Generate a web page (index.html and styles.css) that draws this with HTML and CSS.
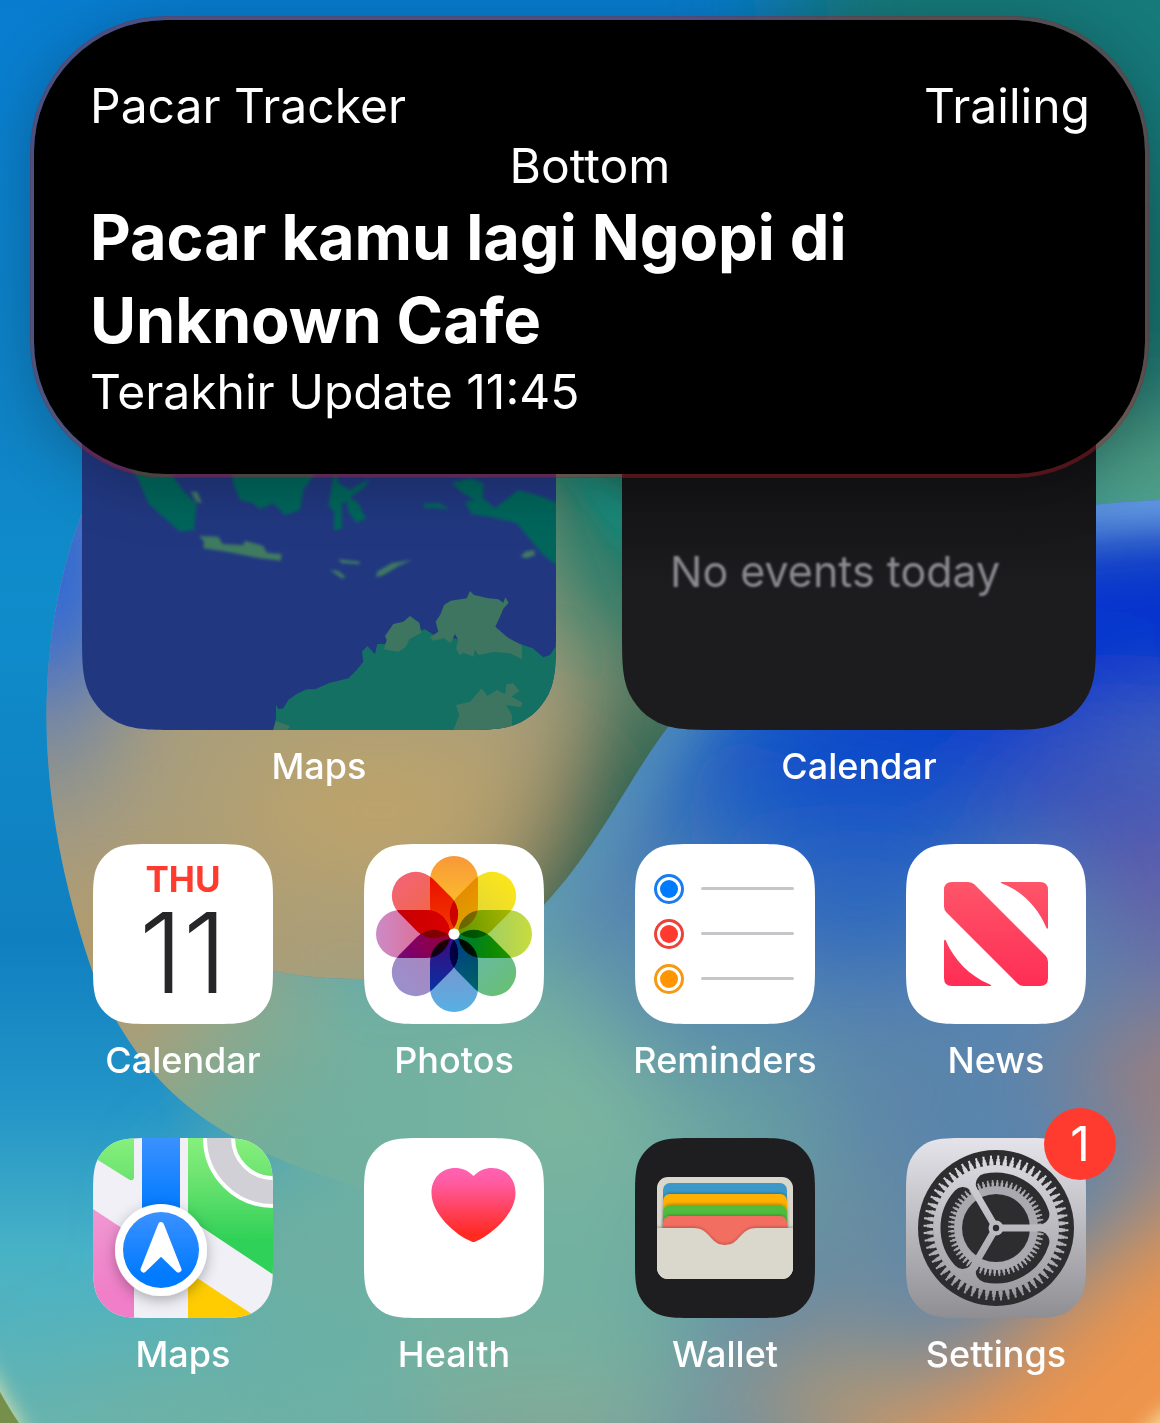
FILE: index.html
```html
<!DOCTYPE html>
<html lang="en">
<head>
<meta charset="utf-8">
<meta name="viewport" content="width=device-width, initial-scale=1">
<title>Home Screen</title>
<link rel="stylesheet" href="styles.css">
</head>
<body>
<svg class="wallpaper" viewBox="0 0 1160 1423" preserveAspectRatio="none" aria-hidden="true">
  <defs>
    <clipPath id="app-shape" clipPathUnits="objectBoundingBox">
      <path transform="scale(.0055556)" d="M61 0H119C136.500 0 145.300 0 154.700 3C165.100 6.800 173.200 14.900 177 25.300C180 34.700 180 43.500 180 61V119C180 136.500 180 145.300 177 154.700C173.200 165.100 165.100 173.200 154.700 177C145.300 180 136.500 180 119 180H61C43.500 180 34.700 180 25.300 177C14.900 173.200 6.800 165.100 3 154.700C0 145.300 0 136.500 0 119V61C0 43.500 0 34.700 3 25.300C6.800 14.900 14.900 6.800 25.300 3C34.700 0 43.500 0 61 0Z"/>
    </clipPath>
    <clipPath id="widget-shape" clipPathUnits="objectBoundingBox">
      <path transform="scale(.0021097)" d="M101 0H373C402 0 417 0 432 5C449 11 463 25 469 42C474 57 474 72 474 101V373C474 402 474 417 469 432C463 449 449 463 432 469C417 474 402 474 373 474H101C72 474 57 474 42 469C25 463 11 449 5 432C0 417 0 402 0 373V101C0 72 0 57 5 42C11 25 25 11 42 5C57 0 72 0 101 0Z"/>
    </clipPath>
    <filter id="soft" filterUnits="userSpaceOnUse" x="-400" y="-400" width="2000" height="2300"><feGaussianBlur stdDeviation="55"/></filter>
    <filter id="softer" filterUnits="userSpaceOnUse" x="-400" y="-400" width="2000" height="2300"><feGaussianBlur stdDeviation="22"/></filter>
    <filter id="edge" filterUnits="userSpaceOnUse" x="-400" y="-400" width="2000" height="2300"><feGaussianBlur stdDeviation="10"/></filter>
    <linearGradient id="sky" x1="0" y1="0" x2="0" y2="1">
      <stop offset="0" stop-color="#087dd0"/><stop offset=".3" stop-color="#0f84c6"/>
      <stop offset=".42" stop-color="#0f8ccb"/><stop offset=".66" stop-color="#107fc0"/>
      <stop offset=".78" stop-color="#2496c8"/><stop offset=".88" stop-color="#48b2c6"/>
      <stop offset="1" stop-color="#66b4b0"/>
    </linearGradient>
    <linearGradient id="fade-x" gradientUnits="userSpaceOnUse" x1="190" y1="1240" x2="400" y2="1190">
      <stop offset="0" stop-color="#000"/><stop offset="1" stop-color="#fff"/>
    </linearGradient>
    <linearGradient id="rim" gradientUnits="userSpaceOnUse" x1="560" y1="900" x2="1160" y2="500">
      <stop offset="0" stop-color="#64a8b4" stop-opacity=".5"/><stop offset=".35" stop-color="#4a98cc" stop-opacity=".5"/><stop offset="1" stop-color="#70a8f0" stop-opacity=".95"/>
    </linearGradient>
    <mask id="fade" maskUnits="userSpaceOnUse" x="0" y="0" width="1160" height="1423"><rect width="1160" height="1423" fill="url(#fade-x)"/></mask>
    <clipPath id="petal"><path d="M100 470C20 640 40 820 93 973C150 1110 240 1150 362 1188L700 1240V440Z"/></clipPath>
    <clipPath id="wave"><path d="M150 930C230 965 290 980 364 979C440 976 500 950 544 905C600 845 630 775 672 722C780 590 920 510 1160 500V1423H100Z"/></clipPath>
  </defs>
  <rect width="1160" height="1423" fill="url(#sky)"/>
  <g filter="url(#soft)">
    <path d="M780 -200H1400V560H820Z" fill="#12797a"/>
    <ellipse cx="1130" cy="300" rx="60" ry="140" fill="#146d66"/>
    <ellipse cx="1170" cy="500" rx="130" ry="70" fill="#59a586"/>
    <ellipse cx="300" cy="1250" rx="110" ry="90" fill="#6eae9e"/>
    <ellipse cx="220" cy="1430" rx="160" ry="60" fill="#70b0a2"/>
  </g>
  <g clip-path="url(#petal)">
    <rect width="1160" height="1423" fill="#a99e7a"/>
    <g filter="url(#soft)">
      <ellipse cx="40" cy="560" rx="100" ry="150" fill="#2c66dc"/>
      <ellipse cx="50" cy="760" rx="35" ry="60" fill="#6080b0"/>
      <ellipse cx="380" cy="810" rx="150" ry="60" fill="#c2a466"/>
      <ellipse cx="150" cy="940" rx="90" ry="60" fill="#b89862"/>
      <path d="M480 300H800V640H560Z" fill="#1d7868"/>
      <path d="M720 560L600 740L520 900L440 1020L740 1000Z" fill="#1a5c4c"/>
      <path d="M240 1050H700V1400H200Z" fill="#6aae9c"/>
      <path d="M60 1130L300 1040V1300Z" fill="#74ae96"/>
    </g>
    <path d="M556 460L630 500V560Z" fill="#168a7c" filter="url(#edge)"/>
  </g>
  <g mask="url(#fade)"><g clip-path="url(#wave)">
    <rect width="1160" height="1423" fill="#5585b0"/>
    <g filter="url(#soft)">
      <path d="M640 850L720 660H1000V860Z" fill="#1c60c4"/>
      <ellipse cx="900" cy="740" rx="180" ry="80" fill="#0b49ca"/>
      <path d="M760 560L1400 500V700H900Z" fill="#002ed0"/>
      <ellipse cx="1120" cy="800" rx="130" ry="60" fill="#3c4fb8"/>
      <ellipse cx="860" cy="910" rx="130" ry="60" fill="#2f68be"/>
      <ellipse cx="1180" cy="910" rx="80" ry="60" fill="#6e5ca0"/>
      <ellipse cx="900" cy="1090" rx="90" ry="60" fill="#5f84a6"/>
      <ellipse cx="1200" cy="1080" rx="130" ry="60" fill="#b07c70"/>
      <path d="M1400 1080L1140 1210L960 1380L760 1600H1400Z" fill="#ee944c"/>
      <path d="M100 900L560 930L660 1060L720 1180L680 1500H0Z" fill="#72b0a0"/>
      <ellipse cx="750" cy="1140" rx="70" ry="110" fill="#68a0a0"/>
      <ellipse cx="580" cy="1110" rx="80" ry="60" fill="#80b89e"/>
      <ellipse cx="560" cy="1440" rx="150" ry="40" fill="#8ea890"/>
      <ellipse cx="840" cy="1400" rx="110" ry="60" fill="#b89a6e"/>
      <ellipse cx="860" cy="1240" rx="60" ry="50" fill="#7c9090"/>
    </g>
    <path d="M364 979C440 976 500 950 544 905C600 845 630 775 672 722C780 590 920 510 1160 500H1260" fill="none" stroke="url(#rim)" stroke-width="44" filter="url(#softer)"/>
    <path d="M1180 1400Q1150 1420 1136 1445H1180Z" fill="#f5e0a0" filter="url(#edge)"/>
  </g></g>
  <path d="M-20 1350Q0 1390 30 1440H-20Z" fill="#d2e0b0" filter="url(#edge)"/>
  <path d="M0 1392Q10 1410 19 1423H0Z" fill="#76904c"/>
</svg>

<main class="screen">
  <section class="island" aria-label="Pacar Tracker">
    <div class="island-top"><span>Pacar Tracker</span><span>Trailing</span></div>
    <p class="island-bottom">Bottom</p>
    <h1 class="island-title">Pacar kamu lagi Ngopi di Unknown Cafe</h1>
    <p>Terakhir Update 11:45</p>
  </section>

  <div class="widgets">
    <a class="tile" href="#maps-widget">
      <span class="widget">
        <svg viewBox="0 0 474 474" aria-hidden="true">
          <defs>
            <filter id="map-blur" x="-5%" y="-10%" width="110%" height="120%"><feGaussianBlur stdDeviation="4"/></filter>
          </defs>
          <rect width="474" height="474" fill="#213881"/>
          <g transform="translate(-12 184) scale(.33333)">
            <g filter="url(#map-blur)">
              <g fill="#06665c">
                <path d="M170 60L210 130L235 190L290 240L330 275L372 270L380 190L345 160L320 125L270 60Z"/>
                <path d="M480 60L490 130L510 180L550 190L570 208L610 190L645 225L690 210L700 150L735 100L700 40Z"/>
                <path d="M795 90L805 130L840 150L900 115L880 145L840 172L865 190L888 235L860 250L835 215L830 185L815 190L817 265L792 272L792 215L775 195Z"/>
                <path d="M1060 190L1110 190L1138 210L1105 205L1065 203Z"/>
                <path d="M1145 130L1200 115L1240 130L1238 175L1275 205L1345 150L1400 165L1480 195V390L1420 345L1390 310L1340 250L1260 230L1205 222L1185 185L1215 180L1180 160Z"/>
              </g>
              <g fill="#3f7a60">
                <path d="M362 155L382 155L396 190L380 185Z"/>
                <path d="M388 288L445 290L458 312L520 315L525 302L580 318L590 338L635 342L632 362L570 355L520 345L470 335L400 325L402 305Z"/>
                <path d="M805 358L870 365L868 373L815 369Z"/>
                <path d="M780 390L805 393L828 412L815 415Z"/>
                <path d="M918 412L922 395L965 370L1025 360L985 378L940 405Z"/>
                <path d="M1352 350L1365 335L1392 330L1395 345L1370 355Z"/>
              </g>
            </g>
            <path fill="#147062" d="M608 875L618 835L618 795L626 808L640 805L655 780L680 762L710 748L735 748L780 728L835 715L860 690L880 665L876 635L892 618L915 642L922 612L945 612L990 590L1065 568L1100 590L1200 600L1350 612L1388 625L1420 652L1440 645L1460 615V875Z"/>
            <g fill="#3e7561">
              <path d="M942 628L950 600L945 588L970 552L1000 545L1020 528L1048 548L1054 578L1018 598L1008 620L985 635Z"/>
              <path d="M1080 592L1105 575L1097 545L1112 522L1122 495L1142 482L1190 475L1200 453L1212 465L1255 475L1285 478L1300 488L1306 472L1316 488L1300 506L1290 530L1276 560L1312 592L1355 615L1356 658L1320 640L1270 636L1225 645L1215 628L1210 650L1180 638L1168 645L1158 625L1165 600L1155 582L1142 610L1122 595L1090 602Z"/>
              <path d="M1148 875L1168 825L1158 795L1200 785L1235 745L1252 768L1280 750L1305 762L1310 732L1330 730L1348 752L1325 770L1358 788L1352 802L1308 795L1326 825V875Z"/>
              <path d="M608 875L618 843L660 858L650 875Z"/>
            </g>
          </g>
        </svg>
      </span>
      <span class="label">Maps</span>
    </a>
    <a class="tile" href="#calendar-widget">
      <span class="widget widget-calendar"><span class="events">No events today</span></span>
      <span class="label">Calendar</span>
    </a>
  </div>

  <nav class="apps" aria-label="Apps">
    <a class="tile app" href="#calendar">
      <span class="icon icon-calendar"><span class="weekday">THU</span><span class="day">11</span></span>
      <span class="label">Calendar</span>
    </a>
    <a class="tile app" href="#photos">
      <svg class="icon" viewBox="0 0 180 180" aria-hidden="true">
        <defs>
          <!-- Petal colours are stored inverted: the group adds them up, then inverts the sum -->
          <linearGradient id="p1" x1="0" y1="0" x2="0" y2="1"><stop offset="0" stop-color="#0767c7"/><stop offset="1" stop-color="#002fd7"/></linearGradient>
          <linearGradient id="p2" x1="0" y1="0" x2="0" y2="1"><stop offset="0" stop-color="#0419e5"/><stop offset="1" stop-color="#272fbf"/></linearGradient>
          <linearGradient id="p3" x1="0" y1="0" x2="0" y2="1"><stop offset="0" stop-color="#3723c3"/><stop offset="1" stop-color="#773b7f"/></linearGradient>
          <linearGradient id="p4" x1="0" y1="0" x2="0" y2="1"><stop offset="0" stop-color="#973f8b"/><stop offset="1" stop-color="#974b3f"/></linearGradient>
          <linearGradient id="p5" x1="0" y1="0" x2="0" y2="1"><stop offset="0" stop-color="#a94f1b"/><stop offset="1" stop-color="#73773b"/></linearGradient>
          <linearGradient id="p6" x1="0" y1="0" x2="0" y2="1"><stop offset="0" stop-color="#656f33"/><stop offset="1" stop-color="#4f7f47"/></linearGradient>
          <linearGradient id="p7" x1="0" y1="0" x2="0" y2="1"><stop offset="0" stop-color="#337539"/><stop offset="1" stop-color="#179f83"/></linearGradient>
          <linearGradient id="p8" x1="0" y1="0" x2="0" y2="1"><stop offset="0" stop-color="#0d9b8b"/><stop offset="1" stop-color="#0f97cf"/></linearGradient>
        </defs>
        <rect width="180" height="180" fill="#fff"/>
        <g class="petals">
          <rect x="66" y="12" width="48" height="74" rx="24" fill="url(#p1)"/>
          <rect x="66" y="12" width="48" height="74" rx="24" fill="url(#p2)" transform="rotate(45 90 90)"/>
          <rect x="66" y="12" width="48" height="74" rx="24" fill="url(#p3)" transform="rotate(90 90 90)"/>
          <rect x="66" y="12" width="48" height="74" rx="24" fill="url(#p4)" transform="rotate(135 90 90)"/>
          <rect x="66" y="12" width="48" height="74" rx="24" fill="url(#p5)" transform="rotate(180 90 90)"/>
          <rect x="66" y="12" width="48" height="74" rx="24" fill="url(#p6)" transform="rotate(225 90 90)"/>
          <rect x="66" y="12" width="48" height="74" rx="24" fill="url(#p7)" transform="rotate(270 90 90)"/>
          <rect x="66" y="12" width="48" height="74" rx="24" fill="url(#p8)" transform="rotate(315 90 90)"/>
        </g>
        <circle cx="90" cy="90" r="5.500" fill="#fff"/>
      </svg>
      <span class="label">Photos</span>
    </a>
    <a class="tile app" href="#reminders">
      <svg class="icon" viewBox="0 0 180 180" aria-hidden="true">
        <rect width="180" height="180" fill="#fff"/>
        <g fill="none" stroke-width="3">
          <circle cx="34" cy="45" r="13.500" stroke="#1a7cf0"/><circle cx="34" cy="90" r="13.500" stroke="#ee4238"/><circle cx="34" cy="135" r="13.500" stroke="#f59a12"/>
          <path d="M67.500 44.500H157.500M67.500 89.500H157.500M67.500 134.500H157.500" stroke="#c6c6ca" stroke-linecap="round"/>
        </g>
        <circle cx="34" cy="45" r="9" fill="#007aff"/><circle cx="34" cy="90" r="9" fill="#ff3b30"/><circle cx="34" cy="135" r="9" fill="#ff9500"/>
      </svg>
      <span class="label">Reminders</span>
    </a>
    <a class="tile app" href="#news">
      <svg class="icon" viewBox="0 0 180 180" aria-hidden="true">
        <defs><linearGradient id="news" gradientUnits="userSpaceOnUse" x1="0" y1="38" x2="0" y2="142"><stop offset="0" stop-color="#fe5569"/><stop offset="1" stop-color="#ff2d55"/></linearGradient></defs>
        <rect width="180" height="180" fill="#fff"/>
        <path fill="url(#news)" d="M46 38H62Q66 38 68.500 40.500L139.500 111.500Q142 114 142 117.500V134Q142 142 134 142H118Q114 142 111.500 139.500L40.500 68.500Q38 66 38 62.500V46Q38 38 46 38ZM95 38H134Q142 38 142 46V84Q141 86 140 83C132 64 116 47 97 40Q94 38.500 95 38ZM38 97Q39 94 40 97C48 116 64 132 83 140Q86 141.500 85 142H46Q38 142 38 134Z"/>
      </svg>
      <span class="label">News</span>
    </a>
    <a class="tile app" href="#maps">
      <svg class="icon" viewBox="0 0 180 180" aria-hidden="true">
        <defs>
          <linearGradient id="mg" gradientUnits="userSpaceOnUse" x1="0" y1="0" x2="0" y2="120"><stop offset="0" stop-color="#86f07c"/><stop offset=".3" stop-color="#70e472"/><stop offset=".85" stop-color="#30d158"/></linearGradient>
          <linearGradient id="mb" x1="0" y1="0" x2="0" y2="1"><stop offset="0" stop-color="#3b91ff"/><stop offset=".85" stop-color="#007aff"/></linearGradient>
          <linearGradient id="mp" x1="0" y1="0" x2="0" y2="1"><stop offset="0" stop-color="#f098d2"/><stop offset=".8" stop-color="#f07ec8"/></linearGradient>
          <filter id="ms" x="-30%" y="-30%" width="160%" height="160%"><feDropShadow dx="0" dy="4" stdDeviation="7" flood-color="#000" flood-opacity=".3"/></filter>
        </defs>
        <rect width="180" height="180" fill="#f1f0f7"/>
        <path d="M0 0H41V39Q41 43.500 36 41.500L0 19Z" fill="url(#mg)"/>
        <path d="M0 71L41 98V180H0Z" fill="url(#mp)"/>
        <path d="M49 0H87V85H49Z" fill="url(#mb)"/>
        <path d="M95 0H180V136.500L95 80Z" fill="url(#mg)"/>
        <path d="M95 134L165 180H95Z" fill="#ffcc02"/>
        <circle cx="180" cy="0" r="54" fill="none" stroke="#fff" stroke-width="32"/>
        <circle cx="180" cy="0" r="54" fill="none" stroke="#d1d0d7" stroke-width="24"/>
        <circle cx="68" cy="112" r="46" fill="#fff" filter="url(#ms)"/>
        <circle cx="68" cy="112" r="38" fill="url(#mb)"/>
        <path d="M68 87L85.500 131.500L68 114.500L50.500 131.500Z" fill="#fff" stroke="#fff" stroke-width="6" stroke-linejoin="round"/>
      </svg>
      <span class="label">Maps</span>
    </a>
    <a class="tile app" href="#health">
      <svg class="icon" viewBox="0 0 180 180" aria-hidden="true">
        <defs><linearGradient id="heart" x1="0" y1="0" x2="0" y2="1"><stop offset="0" stop-color="#ff62b4"/><stop offset=".2" stop-color="#ff5ba0"/><stop offset=".9" stop-color="#ff2a20"/></linearGradient></defs>
        <rect width="180" height="180" fill="#fff"/>
        <path fill="url(#heart)" d="M109.500 38C115.500 32 121.500 30 127.500 30C141.500 30 151.500 40 151.500 55C151.500 76 127.500 97 111.500 103.500Q109.500 104.500 107.500 103.500C91.500 97 67.500 76 67.500 55C67.500 40 77.500 30 91.500 30C97.500 30 103.500 32 109.500 38Z"/>
      </svg>
      <span class="label">Health</span>
    </a>
    <a class="tile app" href="#wallet">
      <svg class="icon" viewBox="0 0 180 180" aria-hidden="true">
        <defs>
          <clipPath id="wc"><rect x="22" y="39" width="136" height="102" rx="11"/></clipPath>
          <filter id="ws" x="-10%" y="-20%" width="120%" height="140%"><feDropShadow dx="0" dy="-1" stdDeviation="1.500" flood-color="#000" flood-opacity=".25"/></filter>
        </defs>
        <rect width="180" height="180" fill="#1e1e20"/>
        <g clip-path="url(#wc)">
          <rect x="22" y="39" width="136" height="102" fill="#dad8cd"/>
          <rect x="28" y="45" width="124" height="60" rx="7" fill="#3b98c9"/>
          <rect x="28" y="56" width="124" height="60" rx="7" fill="#ffb003" filter="url(#ws)"/>
          <rect x="28" y="67" width="124" height="60" rx="7" fill="#50bc3e" filter="url(#ws)"/>
          <rect x="28" y="78" width="124" height="60" rx="7" fill="#f26e61" filter="url(#ws)"/>
          <path d="M20 90H58C76 90 74 107 90 107C106 107 104 90 122 90H160V145H20Z" fill="#dad8cd" filter="url(#ws)"/>
        </g>
      </svg>
      <span class="label">Wallet</span>
    </a>
    <a class="tile app" href="#settings">
      <svg class="icon" viewBox="0 0 180 180" aria-hidden="true">
        <defs>
          <linearGradient id="sb" x1="0" y1="0" x2="0" y2="1"><stop offset="0" stop-color="#e5e4ea"/><stop offset="1" stop-color="#8e8e93"/></linearGradient>
          <linearGradient id="sg" gradientUnits="userSpaceOnUse" x1="0" y1="18" x2="0" y2="162"><stop offset="0" stop-color="#dcdbe1"/><stop offset="1" stop-color="#98989d"/></linearGradient>
        </defs>
        <rect width="180" height="180" fill="url(#sb)"/>
        <circle cx="90" cy="90" r="78" fill="#2d2d2f"/>
        <circle cx="90" cy="90" r="63" fill="url(#sg)"/>
        <g fill="none" stroke="url(#sg)">
          <circle cx="90" cy="90" r="64.500" stroke-width="4" pathLength="60" stroke-dasharray=".62 .38"/>
          <circle cx="90" cy="90" r="67.500" stroke-width="3" pathLength="60" stroke-dasharray=".46 .54" stroke-dashoffset="-.08"/>
          <circle cx="90" cy="90" r="70.500" stroke-width="4" pathLength="60" stroke-dasharray=".28 .72" stroke-dashoffset="-.17"/>
        </g>
        <g fill="none" stroke="#2d2d2f" stroke-width="21" stroke-linecap="round">
          <path d="M132.900 76.500A45 45 0 0 0 80.300 46.100"/>
          <path d="M56.800 59.600A45 45 0 0 0 56.800 120.400"/>
          <path d="M80.300 133.900A45 45 0 0 0 132.900 103.500"/>
        </g>
        <g fill="none" stroke="#aaa9af">
          <circle cx="90" cy="90" r="38" stroke-width="8"/>
          <circle cx="90" cy="90" r="43.500" stroke-width="4" pathLength="60" stroke-dasharray=".58 .42"/>
          <circle cx="90" cy="90" r="46.500" stroke-width="3" pathLength="60" stroke-dasharray=".34 .66" stroke-dashoffset="-.12"/>
        </g>
        <circle cx="90" cy="90" r="34" fill="#2d2d2f"/>
        <path d="M90 90H146M90 90L62 42M90 90L62 138" fill="none" stroke="url(#sg)" stroke-width="7"/>
        <circle cx="90" cy="90" r="7.500" fill="#bcbbc1"/>
        <circle cx="90" cy="90" r="3.200" fill="#2d2d2f"/>
      </svg>
      <span class="badge">1</span>
      <span class="label">Settings</span>
    </a>
  </nav>
</main>
</body>
</html>
```
FILE: styles.css
```css
* {
  box-sizing: border-box;
}

body {
  margin: 0;
  background: #107fc0;
  color: #fff;
  font-family: Inter, "Liberation Sans", sans-serif;
}

p,
h1 {
  margin: 0;
}

a {
  color: inherit;
  text-decoration: none;
}

.wallpaper {
  position: fixed;
  inset: 0;
  z-index: -1;
  width: 100%;
  height: 100%;
}

.screen {
  position: relative;
  min-height: 100vh;
  padding: 256px 64px 47px 82px;
}

/* Expanded live activity, floating over the home screen */
.island {
  position: absolute;
  top: 16px;
  left: 30px;
  right: 11px;
  z-index: 1;
  padding: 56px 55px 52px 56px;
  border: 4px solid rgba(160, 24, 34, 0.45);
  border-radius: 136px;
  background: #000;
  background-clip: padding-box;
  box-shadow: 0 8px 60px rgba(0, 0, 0, 0.25);
  font-size: 48px;
  line-height: 60px;
}

.island-top {
  display: flex;
  justify-content: space-between;
}

.island-bottom {
  text-align: center;
}

.island-title {
  font-size: 63px;
  font-weight: 700;
  line-height: 83px;
}

.tile {
  position: relative;
  display: flex;
  flex-direction: column;
  align-items: center;
  gap: 14px;
}

.label {
  font-size: 36px;
  font-weight: 500;
  line-height: 44px;
  white-space: nowrap;
}

.widgets {
  display: grid;
  grid-template-columns: 1fr 1fr;
  gap: 66px;
}

.widget {
  display: block;
  width: 100%;
  aspect-ratio: 1;
  clip-path: url(#widget-shape);
}

.widget svg {
  display: block;
  width: 100%;
  height: 100%;
}

.widget-calendar {
  display: flex;
  align-items: center;
  padding: 156px 48px 0;
  background: linear-gradient(#111113 40%, #1c1c1e 70%);
}

.events {
  color: #8a8a90;
  font-size: 43px;
  filter: blur(1px);
  white-space: nowrap;
}

.apps {
  display: grid;
  grid-template-columns: repeat(4, 180px);
  justify-content: space-between;
  row-gap: 56px;
  margin-top: 56px;
  padding: 0 10px 0 11px;
}

.icon {
  display: block;
  width: 180px;
  height: 180px;
  clip-path: url(#app-shape);
}

.icon-calendar {
  display: flex;
  flex-direction: column;
  align-items: center;
  padding-top: 17px;
  background: #fff;
}

.weekday {
  color: #ff3b30;
  font-size: 35px;
  font-weight: 700;
  line-height: 36px;
}

.day {
  color: #262628;
  font-size: 112px;
  font-weight: 300;
  line-height: 110px;
}

.petals {
  filter: invert(1);
}

.petals rect {
  mix-blend-mode: plus-lighter;
}

.badge {
  position: absolute;
  top: -30px;
  right: -30px;
  width: 72px;
  height: 72px;
  border-radius: 50%;
  background: #ff3b30;
  font-size: 48px;
  line-height: 72px;
  text-align: center;
}
```
